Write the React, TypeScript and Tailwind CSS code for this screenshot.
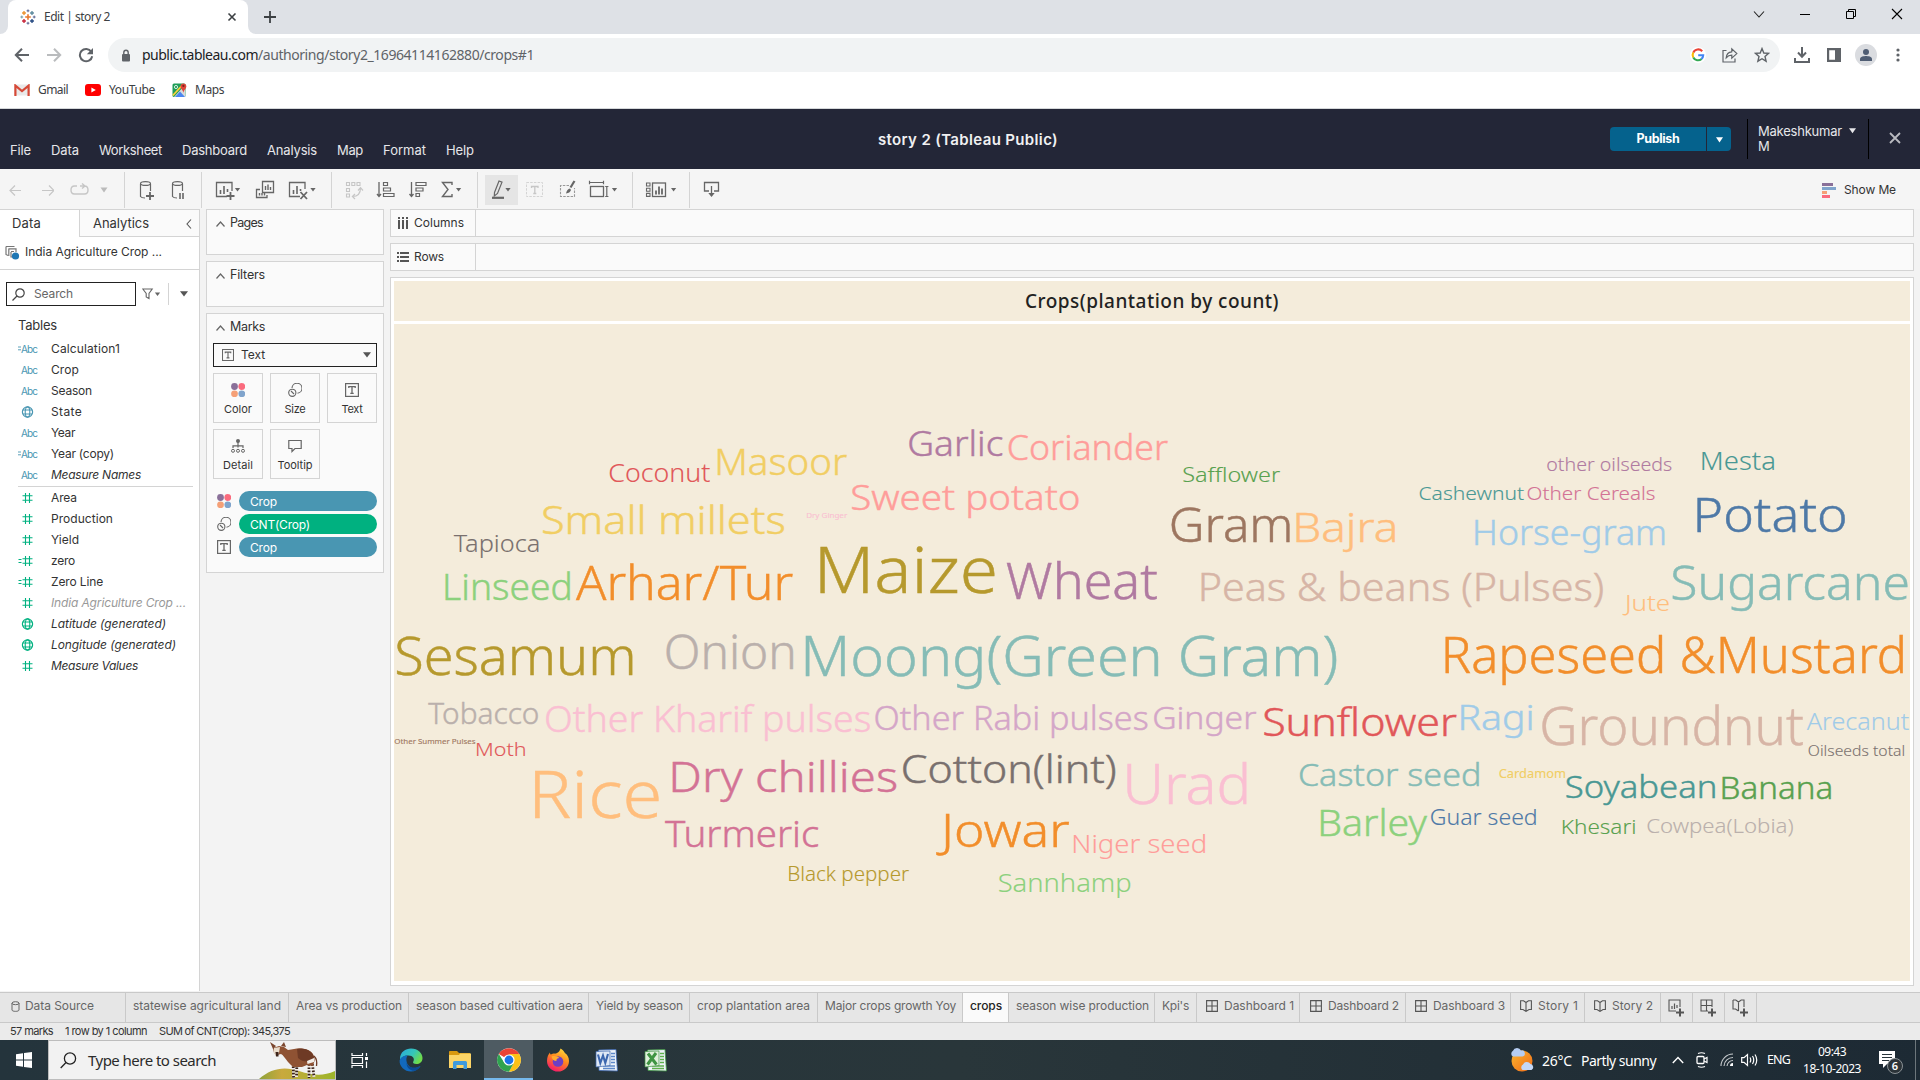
import React, { useLayoutEffect, useRef, useState } from "react";
import clsx from "clsx";

/* Single line of text, tracked so that it fills a given width. */
function Fit({ w, className, children }: { w: number; className?: string; children: string }) {
  const ref = useRef<HTMLSpanElement>(null);
  const [ls, setLs] = useState(0);
  useLayoutEffect(() => {
    const el = ref.current;
    if (!el) return;
    el.style.letterSpacing = "0px";
    const natural = el.getBoundingClientRect().width;
    const next = (w - natural) / children.length;
    el.style.letterSpacing = next + "px";
    setLs(next);
  }, [w, children]);
  return (
    <span ref={ref} className={clsx("inline-block whitespace-pre shrink-0", className)} style={{ letterSpacing: ls }}>
      {children}
    </span>
  );
}

type IconProps = { w: number; h: number; className?: string; children: React.ReactNode };
function Svg({ w, h, className, children }: IconProps) {
  return (
    <svg width={w} height={h} viewBox={`0 0 ${w} ${h}`} fill="none" className={clsx("shrink-0", className)}>
      {children}
    </svg>
  );
}

/* ---------- Browser chrome ---------- */

function TableauMark() {
  const plus = (x: number, y: number, r: number, c: string, s = 1.3) => (
    <path key={`${x}-${y}`} d={`M${x - r} ${y}H${x + r}M${x} ${y - r}V${y + r}`} stroke={c} strokeWidth={s} />
  );
  return (
    <Svg w={16} h={16}>
      {plus(8, 8, 2.8, "#e8762d", 1.6)}
      {plus(4, 4, 1.9, "#eb912c")}
      {plus(12, 4, 1.9, "#59879b")}
      {plus(4, 12, 1.9, "#c72035")}
      {plus(12, 12, 1.9, "#1f447e")}
      {plus(8, 1.8, 1.4, "#5b6591", 1)}
      {plus(8, 14.2, 1.4, "#5b6591", 1)}
      {plus(1.8, 8, 1.4, "#7199a6", 1)}
      {plus(14.2, 8, 1.4, "#5b6591", 1)}
    </Svg>
  );
}

function TabStrip() {
  return (
    <div className="flex h-[34px] bg-[#dee1e6]">
      <div className="flex w-2 items-end bg-white">
        <div className="h-full w-2 rounded-br-lg bg-[#dee1e6]" />
      </div>
      <div className="flex w-[240px] items-center rounded-t-lg bg-white pl-3">
        <TableauMark />
        <Fit w={66} className="ml-2 text-[12px] text-[#3c4043]">Edit | story 2</Fit>
        <Svg w={10} h={10} className="ml-[117px]">
          <path d="M1.5 1.5L8.5 8.5M8.5 1.5L1.5 8.5" stroke="#3c4043" strokeWidth="1.6" />
        </Svg>
      </div>
      <div className="w-2 bg-white">
        <div className="h-full w-2 rounded-bl-lg bg-[#dee1e6]" />
      </div>
      <Svg w={14} h={14} className="ml-[7px] mt-[10px]">
        <path d="M7 1V13M1 7H13" stroke="#3c4043" strokeWidth="1.8" />
      </Svg>
      <div className="ml-auto mr-[16px] mt-[7px] flex gap-[32px]">
        <Svg w={14} h={14}><path d="M2 4.5L7 10L12 4.5" stroke="#222" strokeWidth="1.1" /></Svg>
        <Svg w={14} h={14}><path d="M2 7.5H12" stroke="#000" strokeWidth="1" /></Svg>
        <Svg w={14} h={14}><path d="M2.5 4.5H9.5V11.5H2.5ZM4.5 4.5V2.5H11.5V9.5H9.5" stroke="#000" strokeWidth="1" /></Svg>
        <Svg w={14} h={14}><path d="M2 2L12 12M12 2L2 12" stroke="#000" strokeWidth="1.1" /></Svg>
      </div>
    </div>
  );
}

function GoogleG() {
  return (
    <Svg w={16} h={16}>
      <circle cx="8" cy="8" r="8" fill="#fff" />
      <path d="M12.2 4.2A5.3 5.3 0 0 0 3.3 5.6" stroke="#ea4335" strokeWidth="2.1" />
      <path d="M3.3 5.5A5.3 5.3 0 0 0 3.3 10.6" stroke="#fbbc05" strokeWidth="2.1" />
      <path d="M3.3 10.4A5.3 5.3 0 0 0 11.6 11.9" stroke="#34a853" strokeWidth="2.1" />
      <path d="M11.4 12A5.3 5.3 0 0 0 13.2 8.2H8.2" stroke="#4285f4" strokeWidth="2.1" />
    </Svg>
  );
}

function AddressBar() {
  return (
    <div className="flex h-[42px] items-center bg-white">
      <Svg w={16} h={16} className="ml-[14px]"><path d="M15 8H2M8 1.8L1.8 8L8 14.2" stroke="#5f6368" strokeWidth="2" /></Svg>
      <Svg w={16} h={16} className="ml-4"><path d="M1 8H14M8 1.8L14.2 8L8 14.2" stroke="#babcbe" strokeWidth="2" /></Svg>
      <Svg w={16} h={16} className="ml-4">
        <path d="M13.3 4.7A6.2 6.2 0 1 0 14.2 9.2" stroke="#5f6368" strokeWidth="2" />
        <path d="M15 1V7.2H8.8Z" fill="#5f6368" />
      </Svg>
      <div className="ml-[14px] flex h-[34px] w-[1672px] items-center rounded-full bg-[#f1f3f4]">
        <Svg w={10} h={13} className="ml-[13px]">
          <path d="M2.8 5.5V3.4A2.2 2.2 0 0 1 7.2 3.4V5.5" stroke="#5f6368" strokeWidth="1.4" />
          <rect x="1" y="5" width="8" height="7.5" rx="1" fill="#5f6368" />
        </Svg>
        <Fit w={116} className="ml-[11px] pb-px text-[14px] text-[#202124]">public.tableau.com</Fit>
        <Fit w={276} className="pb-px text-[14px] text-[#5f6368]">/authoring/story2_16964114162880/crops#1</Fit>
        <div className="ml-auto mr-[10px] flex items-center gap-4">
          <GoogleG />
          <Svg w={16} h={16}>
            <path d="M4.5 3.5H1V15H13V11.5" stroke="#5f6368" strokeWidth="1.2" />
            <path d="M4.2 10.8C4.5 7 6.5 5 9.8 4.8V1.8L14.8 6.6L9.8 11.2V8.2C7.5 8.2 5.8 8.9 4.2 10.8Z" stroke="#5f6368" strokeWidth="1.2" />
          </Svg>
          <Svg w={16} h={16}>
            <path d="M8 1.6L9.8 6L14.6 6.4L11 9.5L12.1 14.2L8 11.7L3.9 14.2L5 9.5L1.4 6.4L6.2 6Z" stroke="#5f6368" strokeWidth="1.4" />
          </Svg>
        </div>
      </div>
      <Svg w={16} h={16} className="ml-[14px]">
        <path d="M8 0V9M4 5.5L8 9.7L12 5.5M1 11V15H15V11" stroke="#5f6368" strokeWidth="2" />
      </Svg>
      <Svg w={16} h={16} className="ml-4">
        <path d="M1 1H15V15H1ZM3.2 3.2V12.8H9V3.2Z" fill="#5f6368" fillRule="evenodd" />
      </Svg>
      <Svg w={22} h={22} className="ml-[13px]">
        <circle cx="11" cy="11" r="11" fill="#dadce0" />
        <circle cx="11" cy="8" r="3" fill="#4f5d73" />
        <path d="M5 17V15C5 12.6 9 12 11 12S17 12.6 17 15V17Z" fill="#4f5d73" />
      </Svg>
      <Svg w={4} h={16} className="ml-[19px]">
        <circle cx="2" cy="3" r="1.6" fill="#5f6368" />
        <circle cx="2" cy="8" r="1.6" fill="#5f6368" />
        <circle cx="2" cy="13" r="1.6" fill="#5f6368" />
      </Svg>
    </div>
  );
}

function Bookmarks() {
  return (
    <div className="flex h-[33px] items-center border-b border-[#d5d8da] bg-white pb-[5px] text-[12px] text-[#3c4043]">
      <Svg w={16} h={12} className="ml-[14px]">
        <rect x="0.5" y="0.5" width="15" height="11" fill="#e9e9e9" />
        <path d="M1.4 12V1.6L8 7L14.6 1.6V12" stroke="#d64937" strokeWidth="2.2" />
      </Svg>
      <Fit w={30} className="ml-2">Gmail</Fit>
      <Svg w={16} h={12} className="ml-[17px]">
        <rect width="16" height="12" rx="3" fill="#f00" />
        <path d="M6.4 3.4V8.6L10.8 6Z" fill="#fff" />
      </Svg>
      <Fit w={46} className="ml-2">YouTube</Fit>
      <Svg w={16} h={16} className="ml-[17px]">
        <rect x="0.5" y="1.5" width="13" height="13.5" rx="1.5" fill="#1f9d58" />
        <path d="M13 3L2 15H13.5Z" fill="#d8dadc" />
        <path d="M3 15L8 9.6L13 15Z" fill="#4b87f0" />
        <path d="M0.8 13.5L11 2.5" stroke="#fcd33b" strokeWidth="1.8" />
        <circle cx="4" cy="5" r="1.6" stroke="#fff" strokeWidth="0.8" />
        <path d="M11.4 11C11.2 8 8.5 7 8.5 4A3 3 0 0 1 14.4 4C14.4 7 11.7 8 11.4 11Z" fill="#e0453a" />
        <circle cx="11.4" cy="3.9" r="1.1" fill="#7b231e" />
      </Svg>
      <Fit w={29} className="ml-[7px]">Maps</Fit>
    </div>
  );
}

/* ---------- Application header ---------- */

const menus: [string, number][] = [
  ["File", 21], ["Data", 28], ["Worksheet", 63], ["Dashboard", 65],
  ["Analysis", 50], ["Map", 26], ["Format", 43], ["Help", 28],
];

function Header() {
  return (
    <div className="relative flex h-[60px] bg-[#232637] text-[13px] text-[#e6e6ea]">
      <div className="flex items-end gap-5 pb-[9px] pl-[10px]">
        {menus.map(([m, w]) => <Fit key={m} w={w}>{m}</Fit>)}
      </div>
      <div className="absolute left-[878px] top-5">
        <Fit w={180} className="text-[15px] font-semibold text-[#f0f0f2]">story 2 (Tableau Public)</Fit>
      </div>
      <div className="ml-auto flex">
        <div className="mt-[18px] flex h-6 gap-px overflow-hidden rounded-sm">
          <div className="flex w-[96px] items-center justify-center bg-[#05628d] font-bold text-white">
            <Fit w={43} className="text-[12.5px]">Publish</Fit>
          </div>
          <div className="flex w-6 items-center justify-center bg-[#05628d] pt-px">
            <Svg w={7} h={6}><path d="M0 0.3H7L3.5 5.5Z" fill="#fff" /></Svg>
          </div>
        </div>
        <div className="ml-4 mt-[10px] h-10 w-px bg-black" />
        <div className="ml-[10px] mt-[15px] w-[85px] text-[13px] leading-[15px]">
          <Fit w={84}>Makeshkumar</Fit>
          <div>M</div>
        </div>
        <Svg w={7} h={6} className="ml-[6px] mt-[19px]"><path d="M0 0.3H7L3.5 5.3Z" fill="#e6e6ea" /></Svg>
        <div className="ml-3 mt-[10px] h-10 w-px bg-black" />
        <Svg w={12} h={12} className="ml-5 mr-[19px] mt-[23px]">
          <path d="M1 1L11 11M11 1L1 11" stroke="#b9bac0" strokeWidth="1.8" />
        </Svg>
      </div>
    </div>
  );
}

/* ---------- Toolbar ---------- */

const G = "#666";
const L = "#c6c6c6";

function Sep({ className }: { className: string }) {
  return <div className={clsx("h-9 w-px shrink-0 bg-[#d4d4d4]", className)} />;
}

function Caret({ x, y = 10, c = G }: { x: number; y?: number; c?: string }) {
  return <path d={`M${x - 2.6} ${y}H${x + 2.6}L${x} ${y + 3.4}Z`} fill={c} />;
}

function ToolBar() {
  return (
    <div className="flex h-10 items-center bg-[#f5f5f5] pt-[2px]">
      <Svg w={12} h={24} className="ml-[9px]"><path d="M12 12.5H1M6 7.5L1 12.5L6 17.5" stroke={L} strokeWidth="1.2" /></Svg>
      <Svg w={12} h={24} className="ml-[21px]"><path d="M0 12.5H12M7 7.5L12 12.5L7 17.5" stroke={L} strokeWidth="1.2" /></Svg>
      <Svg w={20} h={24} className="ml-4">
        <path d="M7 8H4.500Q1 8 1 12T4.500 16H14.500Q18 16 18 12T14.500 8M10 8H15M12 5.500L15 8L12 10.500" stroke={L} strokeWidth="1.4" />
      </Svg>
      <Svg w={8} h={24} className="ml-[10px] mr-[16px]"><path d="M0.500 9.500H7.500L4 14.500Z" fill="#bbb" /></Svg>
      <Sep className="" />
      <Svg w={20} h={24} className="ml-[14px]">
        <path d="M1.5 6V18.5Q2.5 20 6 20M11.5 6V13" stroke={G} strokeWidth="1.2" />
        <ellipse cx="6.5" cy="5.5" rx="5" ry="1.9" stroke={G} strokeWidth="1.2" />
        <path d="M11 14V22M7 18H15" stroke={G} strokeWidth="1.8" />
      </Svg>
      <Svg w={20} h={24} className="ml-[12px]">
        <path d="M1.5 6V18.5Q2.5 20 6 20M11.5 6V13" stroke={G} strokeWidth="1.2" />
        <ellipse cx="6.5" cy="5.5" rx="5" ry="1.9" stroke={G} strokeWidth="1.2" />
        <path d="M9 15V21M12 15V21" stroke={G} strokeWidth="1.6" />
      </Svg>
      <Sep className="ml-[10px]" />
      <Svg w={30} h={24} className="ml-[13px]">
        <path d="M12 18.5H1.5V4.5H17V13" stroke={G} strokeWidth="1.3" />
        <path d="M5.5 12V16M9 8V16M12.5 11V14" stroke={G} strokeWidth="1.6" />
        <path d="M15.5 14V22M11.5 18H19.5" stroke={G} strokeWidth="1.8" />
        <Caret x={22.5} />
      </Svg>
      <Svg w={24} h={24} className="ml-[10px]">
        <path d="M7.5 3.5H18.5V14.5H7.5Z M5 11.5H1.5V19.5H12V17" stroke={G} strokeWidth="1.3" />
        <path d="M10.5 8V12M13 6.5V12M15.5 9V12M4.5 15V17.5M7 15V17.5M9.5 15V17.5" stroke={G} strokeWidth="1.4" />
      </Svg>
      <Svg w={30} h={24} className="ml-[9px]">
        <path d="M12 18.5H1.5V4.5H17V11" stroke={G} strokeWidth="1.3" />
        <path d="M5.5 12V16M9 8V16M12.5 11V13" stroke={G} strokeWidth="1.6" />
        <path d="M12.5 14L19 21M19 14L12.5 21" stroke={G} strokeWidth="1.8" />
        <Caret x={25} />
      </Svg>
      <Sep className="ml-[13px]" />
      <Svg w={20} h={24} className="ml-[13px]">
        <path d="M1.5 4.5H4.5V7.5H1.5ZM6.8 4.5H9.8V7.5H6.8ZM12 4.5H15V7.5H12ZM1.5 10.5H4.5V13.5H1.5ZM1.5 16H4.5V19H1.5Z" stroke={L} strokeWidth="1.1" />
        <path d="M7.5 18.5Q15.5 18.5 15.5 10M13 12.5L15.5 9.7L18 12.5M10 16L7.4 18.5L10 21" stroke={L} strokeWidth="1.2" />
      </Svg>
      <Svg w={20} h={24} className="ml-[11px]">
        <path d="M3 4V18M1 16L3 18.5L5 16" stroke={G} strokeWidth="1.3" />
        <path d="M7.5 4.5H11.5V7.5H7.5ZM7.5 10H14.5V13H7.5ZM7.5 15.5H18V18.5H7.5Z" stroke={G} strokeWidth="1.2" />
      </Svg>
      <Svg w={20} h={24} className="ml-3">
        <path d="M3.5 4V18M1.5 16L3.5 18.5L5.5 16" stroke={G} strokeWidth="1.3" />
        <path d="M8 4.5H18V7.5H8ZM8 10H15V13H8ZM8 15.5H11.5V18.5H8Z" stroke={G} strokeWidth="1.2" />
      </Svg>
      <Svg w={24} h={24} className="ml-3">
        <path d="M12 7V4.5H2.5L8 11.5L2.5 18.5H12V16" stroke={G} strokeWidth="1.4" />
        <Caret x={18.6} />
      </Svg>
      <Sep className="ml-[13px]" />
      <div className="ml-[7px] flex h-[30px] w-[33px] items-center bg-[#e5e5e5]">
        <Svg w={33} h={24}>
          <path d="M9.5 14.5L14 3L17 4.2L12.5 15.5L9.3 18Z" stroke={G} strokeWidth="1.2" />
          <path d="M7 19.8H19" stroke={G} strokeWidth="2.2" />
          <Caret x={23} />
        </Svg>
      </div>
      <Svg w={20} h={24} className="ml-[7px]">
        <rect x="1.5" y="4.5" width="16" height="14" stroke="#d4d4d4" strokeDasharray="2.5 1.2" />
        <path d="M6.5 10V8.5H13V10M9.8 8.5V15.5M8.3 15.5H11.3" stroke={L} strokeWidth="1.3" />
      </Svg>
      <Svg w={20} h={24} className="ml-[13px]">
        <path d="M11 7.5H2.5V18.5H16.5V10" stroke="#999" strokeDasharray="2.5 1.2" strokeWidth="1.1" />
        <path d="M16.5 3L12.5 9.5" stroke={G} strokeWidth="2.2" />
        <path d="M8 15.5Q9 10.8 12 10.5L13 12Q12 15 8 15.5Z" fill={G} />
      </Svg>
      <Svg w={30} h={24} className="ml-[10px]">
        <rect x="2.5" y="8.5" width="13" height="10" stroke={G} strokeWidth="1.3" />
        <path d="M1.5 4.5H15.5M1.5 2.8V6.2M15.5 2.8V6.2M18.8 8.5V18.5M17.2 8.5H20.4M17.2 18.5H20.4" stroke={G} strokeWidth="1.2" />
        <Caret x={26.5} />
      </Svg>
      <Sep className="ml-[14px]" />
      <Svg w={33} h={24} className="ml-3">
        <path d="M1.5 5H5V8H1.5ZM1.5 10.2H5V13.2H1.5ZM1.5 15.4H5V18.4H1.5Z" stroke={G} strokeWidth="1.1" />
        <rect x="7.5" y="5" width="13" height="13.5" stroke={G} strokeWidth="1.3" />
        <path d="M11 12.5V16.5M14 8.5V16.5M17 10.5V16.5" stroke={G} strokeWidth="1.8" />
        <Caret x={28.6} />
      </Svg>
      <Sep className="ml-[11px]" />
      <Svg w={18} h={24} className="ml-[13px]">
        <path d="M6 13H1.5V4.5H15.5V13H11" stroke={G} strokeWidth="1.3" />
        <path d="M8.5 8V16" stroke={G} strokeWidth="1.3" />
        <path d="M5.3 15H11.7L8.5 19Z" fill={G} />
      </Svg>
      <div className="ml-auto mr-[24px] flex items-center">
        <Svg w={14} h={15}>
          <path d="M0 0H11V3H0Z" fill="#8a7099" />
          <path d="M0 4H14V7H0Z" fill="#80a4cc" />
          <path d="M0 8H5V11H0Z" fill="#f5a077" />
          <path d="M0 12H8V15H0Z" fill="#fa6b7e" />
        </Svg>
        <Fit w={52} className="ml-2 text-[12px] text-[#333]">Show Me</Fit>
      </div>
    </div>
  );
}

/* ---------- Data pane ---------- */

type Kind = "abc" | "=abc" | "geo" | "num" | "=num" | "geoNum";

function FieldIcon({ kind }: { kind: Kind }) {
  const eq = kind[0] === "=";
  if (kind === "abc" || kind === "=abc")
    return (
      <div className="flex w-[33px] items-center text-[10px] text-[#4996b2]">
        <span className="w-[3px]">
          {eq && <Svg w={3} h={5}><path d="M0 1H3M0 3.8H3" stroke="#4996b2" strokeWidth="0.9" /></Svg>}
        </span>
        <Fit w={16} className="leading-none">Abc</Fit>
      </div>
    );
  if (kind === "geo" || kind === "geoNum") {
    const c = kind === "geo" ? "#4996b2" : "#00b180";
    return (
      <Svg w={33} h={12}>
        <circle cx="9.5" cy="6" r="5.1" stroke={c} strokeWidth="1.2" />
        <ellipse cx="9.5" cy="6" rx="2.3" ry="5.1" stroke={c} strokeWidth="1.1" />
        <path d="M5 4H14M5 8H14" stroke={c} strokeWidth="1.1" />
      </Svg>
    );
  }
  return (
    <Svg w={33} h={12}>
      <path d="M7.5 1V11M11.5 1V11M4.5 3.8H14.5M4.5 8.2H14.5" stroke="#00b180" strokeWidth="1.1" />
      {eq && <path d="M0.5 4.5H3.5M0.5 7.5H3.5" stroke="#00b180" strokeWidth="1" />}
    </Svg>
  );
}

type Field = [Kind, string, number, string?];
const dimensions: Field[] = [
  ["=abc", "Calculation1", 69],
  ["abc", "Crop", 28],
  ["abc", "Season", 41],
  ["geo", "State", 31],
  ["abc", "Year", 24],
  ["=abc", "Year (copy)", 63],
  ["abc", "Measure Names", 90, "italic"],
];
const measures: Field[] = [
  ["num", "Area", 26],
  ["num", "Production", 62],
  ["num", "Yield", 28],
  ["=num", "zero", 24],
  ["=num", "Zero Line", 52],
  ["num", "India Agriculture Crop ...", 135, "italic text-[#999]"],
  ["geoNum", "Latitude (generated)", 115, "italic"],
  ["geoNum", "Longitude (generated)", 125, "italic"],
  ["num", "Measure Values", 87, "italic"],
];

function Fields({ items }: { items: Field[] }) {
  return (
    <div>
      {items.map(([k, name, w, cls]) => (
        <div key={name} className="flex h-[21px] items-center pl-[18px]">
          <FieldIcon kind={k} />
          <Fit w={w} className={cls}>{name}</Fit>
        </div>
      ))}
    </div>
  );
}

function DataPane() {
  return (
    <div className="flex w-[200px] shrink-0 flex-col border-r border-t border-[#d4d4d4] bg-white text-[12px] text-[#333]">
      <div className="flex h-[27px] text-[13px]">
        <div className="flex w-[79px] items-center pl-3 pt-px"><Fit w={29}>Data</Fit></div>
        <div className="flex flex-1 items-center border-b border-l border-[#d4d4d4] bg-[#fafafa] pl-[13px] pt-[2px]">
          <Fit w={56}>Analytics</Fit>
          <Svg w={6} h={10} className="ml-[37px]"><path d="M5 0.5L1 5L5 9.5" stroke="#555" strokeWidth="1.1" /></Svg>
        </div>
      </div>
      <div className="flex h-[33px] items-center border-b border-[#d4d4d4] pb-[2px] pl-[5px]">
        <Svg w={15} h={15}>
          <path d="M1 1.5H9.5M1 1.5V9.5L3 10.5M3.8 3.5V11M3.8 3.8H11V7M6 7V12H8M6 6.5H9" stroke="#777" strokeWidth="1.2" />
          <circle cx="10.5" cy="11" r="3.6" fill="#1f77b4" />
        </Svg>
        <Fit w={137} className="ml-[5px]">India Agriculture Crop ...</Fit>
      </div>
      <div className="mt-3 flex h-6 items-center pl-[6px]">
        <div className="flex h-6 w-[130px] items-center border border-[#222] pl-[5px]">
          <Svg w={13} h={13}>
            <circle cx="8" cy="5" r="4.2" stroke="#444" strokeWidth="1.2" />
            <path d="M5 8L0.5 12.5" stroke="#444" strokeWidth="1.3" />
          </Svg>
          <Fit w={39} className="ml-[9px] text-[#666]">Search</Fit>
        </div>
        <Svg w={20} h={12} className="ml-[6px]">
          <path d="M0.8 1H10.2L7 5.5V10.5L4.2 9V5.5Z" stroke={G} strokeWidth="1.1" />
          <Caret x={15.5} y={4.5} />
        </Svg>
        <div className="ml-[6px] h-[22px] w-px bg-[#d4d4d4]" />
        <Svg w={8} h={6} className="ml-[11px]"><path d="M0 0.3H8L4 5.5Z" fill="#555" /></Svg>
      </div>
      <div className="mt-[9px] mb-px flex h-[22px] items-center pl-[18px] text-[13px]"><Fit w={39}>Tables</Fit></div>
      <Fields items={dimensions} />
      <div className="ml-[18px] mr-[6px] mt-[1px] h-px bg-[#d4d4d4]" />
      <Fields items={measures} />
    </div>
  );
}

/* ---------- Cards ---------- */

function CardTitle({ w, children }: { w: number; children: string }) {
  return (
    <div className="flex h-[27px] items-center pl-[9px] text-[12.5px] text-[#333]">
      <Svg w={9} h={6}><path d="M0.5 5.5L4.5 1L8.5 5.5" stroke="#666" strokeWidth="1.2" /></Svg>
      <Fit w={w} className="ml-[5px]">{children}</Fit>
    </div>
  );
}

function ColorDots() {
  return (
    <Svg w={14} h={14}>
      <circle cx="3.5" cy="3.5" r="3.4" fill="#8a7099" />
      <circle cx="10.8" cy="3.5" r="3.4" fill="#fa6b7e" />
      <circle cx="3.5" cy="10.8" r="3.4" fill="#f5a077" />
      <circle cx="10.8" cy="10.8" r="3.4" fill="#80a4cc" />
    </Svg>
  );
}
function SizeIcon() {
  return (
    <Svg w={14} h={14}>
      <path d="M4 5A5 5 0 1 1 9.5 10.2" stroke={G} strokeWidth="1.1" />
      <circle cx="4.3" cy="9.8" r="3.6" stroke={G} strokeWidth="1.1" />
      <path d="M3 8L6 11" stroke={G} strokeWidth="1.1" />
    </Svg>
  );
}
function TextIcon({ s = 14 }: { s?: number }) {
  return (
    <svg width={s} height={s} viewBox="0 0 14 14" fill="none" className="shrink-0">
      <rect x="0.6" y="0.6" width="12.8" height="12.8" stroke={G} strokeWidth="1.2" />
      <path d="M3.8 5V3.7H10.2V5M7 3.7V10.4M5.3 10.4H8.7" stroke={G} strokeWidth="1.3" />
    </svg>
  );
}
function DetailIcon() {
  return (
    <Svg w={14} h={14}>
      <circle cx="7" cy="2" r="2" fill={G} />
      <path d="M7 3V8.5M2 9V6.8H12V9" stroke={G} strokeWidth="1.2" />
      <circle cx="2" cy="11.8" r="1.5" stroke={G} />
      <circle cx="7" cy="11.8" r="1.5" stroke={G} />
      <circle cx="12" cy="11.8" r="1.5" stroke={G} />
    </Svg>
  );
}
function TooltipIcon() {
  return (
    <Svg w={14} h={14}><path d="M0.8 1.5H13.2V9.5H7L4 12.5V9.5H0.8Z" stroke={G} strokeWidth="1.2" /></Svg>
  );
}

const markButtons: [string, number, React.ReactNode][] = [
  ["Color", 28, <ColorDots />],
  ["Size", 21, <SizeIcon />],
  ["Text", 21, <TextIcon />],
  ["Detail", 30, <DetailIcon />],
  ["Tooltip", 35, <TooltipIcon />],
];
const pills: [React.ReactNode, string, number, string][] = [
  [<ColorDots />, "Crop", 27, "bg-[#4996b2]"],
  [<SizeIcon />, "CNT(Crop)", 60, "bg-[#00b180]"],
  [<TextIcon />, "Crop", 27, "bg-[#4996b2]"],
];

function Cards() {
  return (
    <div className="ml-[6px] flex w-[178px] shrink-0 flex-col gap-[6px]">
      <div className="h-[46px] border border-[#d4d4d4] bg-[#fafafa]"><CardTitle w={33}>Pages</CardTitle></div>
      <div className="h-[46px] border border-[#d4d4d4] bg-[#fafafa]"><CardTitle w={35}>Filters</CardTitle></div>
      <div className="h-[260px] border border-[#d4d4d4] bg-[#fafafa] pr-[6px]">
        <CardTitle w={35}>Marks</CardTitle>
        <div className="ml-[6px] mt-[2px] flex h-6 items-center border border-[#222] pl-2 pr-[5px] text-[12px] text-[#333]">
          <TextIcon s={12} />
          <Fit w={24} className="ml-[7px]">Text</Fit>
          <Svg w={8} h={6} className="ml-auto"><path d="M0 0.3H8L4 5.5Z" fill="#555" /></Svg>
        </div>
        <div className="ml-[6px] mt-[6px] grid grid-cols-3 gap-x-[7px] gap-y-[6px]">
          {markButtons.map(([n, w, icon]) => (
            <div key={n} className="flex h-[50px] flex-col items-center border border-[#d4d4d4] pt-[9px] text-[11px] text-[#333]">
              {icon}
              <Fit w={w} className="mt-1 leading-4">{n}</Fit>
            </div>
          ))}
        </div>
        <div className="mt-3 flex flex-col gap-[3px] pl-[10px]">
          {pills.map(([icon, n, w, bg], i) => (
            <div key={i} className="flex h-5 items-center">
              {icon}
              <div className={clsx("ml-2 flex h-5 flex-1 items-center rounded-full pl-[11px] pt-px text-[12px] text-white", bg)}>
                <Fit w={w}>{n}</Fit>
              </div>
            </div>
          ))}
        </div>
      </div>
    </div>
  );
}

/* ---------- Word cloud ---------- */

type Word = [text: string, x1: number, x2: number, baseline: number, size: number, color: string];
const words: Word[] = [
  ["Garlic", 909.4, 1002.4, 456, 34.5, "#b07aa1"],
  ["Coriander", 1008.9, 1167.7, 460, 34.5, "#ff9d9a"],
  ["Masoor", 717.9, 846.7, 475, 36, "#f1ce63"],
  ["Coconut", 609.9, 709.9, 481.5, 25, "#e15759"],
  ["Sweet potato", 852.2, 1078.6, 509.5, 34.5, "#ff9d9a"],
  ["Small millets", 543.2, 784, 534, 38.5, "#f1ce63"],
  ["Dry Ginger", 806.9, 847.2, 518, 8, "#fabfd2"],
  ["Tapioca", 453.7, 538.3, 552, 23, "#79706e"],
  ["Linseed", 445.7, 569.6, 600, 36, "#8cd17d"],
  ["Arhar/Tur", 576, 792.5, 600, 48, "#f28e2b"],
  ["Maize", 820.3, 994.5, 593, 65, "#b6992d"],
  ["Wheat", 1006.9, 1156.7, 599, 49, "#b07aa1"],
  ["Sesamum", 397, 632.3, 675, 53, "#b6992d"],
  ["Onion", 666.6, 793, 668.7, 47, "#bab0ac"],
  ["Moong(Green Gram)", 805.9, 1336.6, 676, 56, "#86bcb6"],
  ["Safflower", 1183.4, 1280.2, 481.5, 20.5, "#59a14f"],
  ["Gram", 1171.6, 1289.5, 541.7, 47, "#9d7660"],
  ["Bajra", 1296.9, 1394.6, 541.7, 40, "#ffbe7d"],
  ["other oilseeds", 1547.3, 1671.6, 471, 18, "#b07aa1"],
  ["Mesta", 1702.6, 1773.8, 470, 25, "#499894"],
  ["Cashewnut", 1419.6, 1523.8, 499.7, 19, "#499894"],
  ["Other Cereals", 1527.7, 1654.9, 499.7, 19, "#d37295"],
  ["Potato", 1697.6, 1845, 531.7, 47, "#4e79a7"],
  ["Horse-gram", 1475.6, 1664.2, 545, 35, "#a0cbe8"],
  ["Peas & beans (Pulses)", 1201.6, 1602.8, 600.7, 39, "#d7b5a6"],
  ["Jute", 1622.5, 1668.7, 610.7, 21.5, "#ffbe7d"],
  ["Sugarcane", 1673, 1907.4, 599.7, 47, "#86bcb6"],
  ["Rapeseed &Mustard", 1445.7, 1903, 672.7, 49, "#f28e2b"],
  ["Tobacco", 428.3, 537.8, 723.7, 29, "#bab0ac"],
  ["Other Kharif pulses", 546.2, 869.6, 731.7, 36, "#fabfd2"],
  ["Other Rabi pulses", 875.6, 1147.2, 730, 33, "#d4a6c8"],
  ["Other Summer Pulses", 394.5, 475.6, 743.7, 7.5, "#9d7660"],
  ["Moth", 477, 524.8, 755.7, 19, "#e15759"],
  ["Rice", 534.8, 658.7, 817.7, 67, "#ffbe7d"],
  ["Dry chillies", 673, 896, 791.7, 43, "#d37295"],
  ["Cotton(lint)", 903.4, 1115.4, 782.7, 38, "#79706e"],
  ["Urad", 1127.3, 1246.3, 804.3, 56, "#fabfd2"],
  ["Turmeric", 665, 818.4, 846.7, 36, "#d37295"],
  ["Jowar", 936.3, 1069, 846.7, 46, "#f28e2b"],
  ["Niger seed", 1074, 1205, 852.7, 26, "#ff9d9a"],
  ["Black pepper", 789, 909, 881, 19.5, "#b6992d"],
  ["Sannhamp", 999, 1130.3, 891.7, 26, "#8cd17d"],
  ["Ginger", 1154, 1256, 729, 31.5, "#d4a6c8"],
  ["Sunflower", 1264.4, 1456.5, 735.7, 38, "#e15759"],
  ["Ragi", 1461.4, 1532, 729.7, 35.5, "#a0cbe8"],
  ["Groundnut", 1542.4, 1802.8, 745.3, 53, "#d7b5a6"],
  ["Arecanut", 1806.7, 1908.8, 730, 23, "#a0cbe8"],
  ["Oilseeds total", 1808.6, 1904, 755.7, 14.5, "#79706e"],
  ["Castor seed", 1299.8, 1478.6, 785.5, 31, "#86bcb6"],
  ["Cardamom", 1499.2, 1565, 778, 12, "#f1ce63"],
  ["Soyabean", 1566.5, 1714.8, 798, 31.5, "#499894"],
  ["Banana", 1722.7, 1830.7, 798.7, 31.5, "#59a14f"],
  ["Barley", 1321, 1427, 835.7, 36, "#8cd17d"],
  ["Guar seed", 1431, 1536, 825, 22, "#4e79a7"],
  ["Khesari", 1563, 1634.8, 833.7, 20.5, "#59a14f"],
  ["Cowpea(Lobia)", 1647.5, 1793, 833, 20.5, "#bab0ac"],
];

const wordWeight = (size: number) => (size < 13 ? 400 : 300);

/* Scales each word horizontally so that its ink runs exactly from x1 to x2. */
function WordCloud() {
  const [placed, setPlaced] = useState<{ x: number; k: number }[]>([]);
  useLayoutEffect(() => {
    const ctx = document.createElement("canvas").getContext("2d");
    if (!ctx) return;
    setPlaced(
      words.map(([t, x1, x2, , size]) => {
        ctx.font = `${wordWeight(size)} ${size * 4}px "Noto Sans"`;
        const m = ctx.measureText(t);
        const left = m.actualBoundingBoxLeft / 4;
        const ink = left + m.actualBoundingBoxRight / 4;
        const k = (x2 - x1) / ink;
        return { x: x1 + left * k, k };
      })
    );
  }, []);
  return (
    <svg width={1516} height={657} viewBox="394 324 1516 657" className="block">
      {words.map(([t, x1, , y, size, c], i) => (
        <text
          key={t}
          transform={`translate(${placed[i]?.x ?? x1} ${y}) scale(${placed[i]?.k ?? 1} 1)`}
          fill={c}
          stroke={c}
          strokeWidth={size > 28 ? 0.45 : 0.1}
          fontSize={size}
          fontWeight={wordWeight(size)}
          fontFamily='"Noto Sans", sans-serif'
        >
          {t}
        </text>
      ))}
    </svg>
  );
}

function Shelf({ label, w, icon }: { label: string; w: number; icon: React.ReactNode }) {
  return (
    <div className="flex h-7 border border-[#d4d4d4] bg-[#fafafa]">
      <div className="flex w-[85px] items-center border-r border-[#d4d4d4] pl-[6px] text-[12px] text-[#333]">
        {icon}
        <Fit w={w} className="ml-[5px]">{label}</Fit>
      </div>
    </div>
  );
}

function View() {
  return (
    <div className="ml-[6px] flex w-[1524px] flex-col gap-[6px]">
      <Shelf label="Columns" w={50} icon={
        <Svg w={12} h={12}><path d="M2 0V2M6 0V2M10 0V2M2 3V12M6 3V12M10 3V12" stroke="#555" strokeWidth="2" /></Svg>
      } />
      <Shelf label="Rows" w={30} icon={
        <Svg w={12} h={12}><path d="M0 2H2M0 6H2M0 10H2M3 2H12M3 6H12M3 10H12" stroke="#555" strokeWidth="2" /></Svg>
      } />
      <div className="flex h-[709px] flex-col gap-[3px] border border-[#d4d4d4] bg-white p-[3px]">
        <div className="flex h-10 items-center justify-center bg-[#f4ecdb]">
          <Fit w={254} className="pt-px font-['Noto_Sans',sans-serif] text-[19px] font-medium text-[#222]">Crops(plantation by count)</Fit>
        </div>
        <div className="bg-[#f4ecdb]"><WordCloud /></div>
      </div>
    </div>
  );
}

/* ---------- Sheet tabs and status ---------- */

function GridIcon() {
  return <Svg w={12} h={12}><path d="M0.6 0.6H11.4V11.4H0.6ZM6 0.6V11.4M0.6 6H11.4" stroke="#555" strokeWidth="1.1" /></Svg>;
}
function BookIcon() {
  return <Svg w={12} h={12}><path d="M0.6 0.8H3.5L6 2.5L8.5 0.8H11.4V9.5H9L6 11.4L3 9.5H0.6ZM6 2.5V11" stroke="#555" strokeWidth="1.1" /></Svg>;
}

const sheets: [string, number, string, React.ReactNode?][] = [
  ["statewise agricultural land", 148, "w-[163px] pl-[7px]"],
  ["Area vs production", 106, "w-[120px] pl-[7px]"],
  ["season based cultivation aera", 167, "w-[180px] pl-[7px]"],
  ["Yield by season", 87, "w-[101px] pl-[7px]"],
  ["crop plantation area", 113, "w-[128px] pl-[7px]"],
  ["Major crops growth Yoy", 131, "w-[145px] pl-[7px]"],
  ["crops", 32, "w-[46px] pl-[7px] bg-[#fafafa] text-[#222] font-medium"],
  ["season wise production", 133, "w-[146px] pl-[7px]"],
  ["Kpi's", 27, "w-[42px] pl-[7px]"],
  ["Dashboard 1", 70, "w-[103px] pl-[9px]", <GridIcon />],
  ["Dashboard 2", 71, "w-[106px] pl-[10px]", <GridIcon />],
  ["Dashboard 3", 72, "w-[105px] pl-[9px]", <GridIcon />],
  ["Story 1", 40, "w-[74px] pl-[9px]", <BookIcon />],
  ["Story 2", 41, "w-[76px] pl-[9px]", <BookIcon />],
];

function SheetTabs() {
  const plus = <path d="M12 9.5V17.5M8 13.5H16" stroke="#555" strokeWidth="2" />;
  const cell = "flex w-8 items-center justify-center border-r border-[#c9c9c9] shrink-0";
  return (
    <div className="flex h-[31px] border-y border-[#c9c9c9] bg-[#e6e6e6] text-[12px] text-[#666]">
      <div className="flex w-[126px] shrink-0 items-center border-r border-[#c9c9c9] pb-[3px] pl-[11px]">
        <Svg w={9} h={11}>
          <path d="M1 2V9C1 10.8 8 10.8 8 9V2" stroke="#666" />
          <ellipse cx="4.5" cy="2.2" rx="3.5" ry="1.5" stroke="#666" />
        </Svg>
        <Fit w={69} className="ml-[5px]">Data Source</Fit>
      </div>
      {sheets.map(([n, w, cls, icon]) => (
        <div key={n} className={clsx("flex shrink-0 items-center border-r border-[#c9c9c9] pb-[3px]", cls)}>
          {icon}
          <Fit w={w} className={icon ? "ml-[6px]" : ""}>{n}</Fit>
        </div>
      ))}
      <div className={cell}>
        <Svg w={17} h={18}><path d="M8 12H1V1H12V8" stroke="#555" strokeWidth="1.1" /><path d="M4 7V10M6.5 4.5V10M9 6V9" stroke="#555" strokeWidth="1.2" />{plus}</Svg>
      </div>
      <div className={cell}>
        <Svg w={17} h={18}><path d="M8 12H1V1H12V8M6.5 1V12M1 6.5H12" stroke="#555" strokeWidth="1.1" />{plus}</Svg>
      </div>
      <div className={cell}>
        <Svg w={17} h={18}><path d="M1 1H3.8L6.5 3L9.2 1H12V8M1 1V10H3.5L6.5 12M6.5 3V12" stroke="#555" strokeWidth="1.1" />{plus}</Svg>
      </div>
    </div>
  );
}

function StatusBar() {
  return (
    <div className="flex h-[17px] items-center gap-3 bg-[#ebebeb] pl-[10px] text-[11px] text-[#333]">
      <Fit w={43}>57 marks</Fit>
      <Fit w={82}>1 row by 1 column</Fit>
      <Fit w={131}>SUM of CNT(Crop): 345,375</Fit>
    </div>
  );
}

/* ---------- Desktop taskbar ---------- */

function Okapi() {
  return (
    <svg width="76" height="38" viewBox="0 0 76 38" className="shrink-0">
      <defs>
        <linearGradient id="hill" x1="0" x2="1">
          <stop offset="0" stopColor="#8ea33a" />
          <stop offset="0.3" stopColor="#c9a93e" />
          <stop offset="1" stopColor="#9db52a" />
        </linearGradient>
      </defs>
      <path d="M0 38C12 27 26 25 40 30C56 35 64 35 76 30V38Z" fill="url(#hill)" />
      <path d="M34 19L34.6 37M38 20L37.500 36M50 20L50 37M53 20L55 36" stroke="#f2ece6" strokeWidth="2.800" />
      <path d="M34 19L34.600 37M38 20L37.500 36M50 20L50 37M53 20L55 36" stroke="#3a221a" strokeWidth="2.800" strokeDasharray="1.600 1.600" />
      <path d="M14 7L20 5L25 6L29 9C35 8 40 7 45 8C52 9 56 13 55.500 20L54 25L48 24L43 26H34L29 21C26 17 24 14 22 13L18 14L15 12Z" fill="#8f5233" />
      <path d="M38 8C47 6 55 11 55 18C51 21 44 22 39 17Z" fill="#6e3a25" />
      <path d="M48 20L55 17L55 21L48.500 23Z" fill="#f2ece6" />
      <path d="M11 1L17 5L14 8ZM25 1L22 5L27 6Z" fill="#7b462e" />
      <path d="M15 7L21 6L20 12L17 15L15 12Z" fill="#e9dccb" />
      <path d="M16.500 11H19.500V15.500H17Z" fill="#3c241b" />
      <path d="M55 15C58 18 58 22 57.500 25" stroke="#6e3a25" strokeWidth="1.300" fill="none" />
    </svg>
  );
}

function EdgeIcon() {
  return (
    <svg width="24" height="24" viewBox="0 0 24 24">
      <defs>
        <linearGradient id="edgeTop" x1="0" x2="1" y1="0" y2="0.5">
          <stop offset="0" stopColor="#2aa9e0" />
          <stop offset="0.6" stopColor="#35c6b8" />
          <stop offset="1" stopColor="#6fdc4b" />
        </linearGradient>
      </defs>
      <path d="M1 11C1 4 6.500 0.500 12 0.500C19 0.500 23.500 5.500 23.500 10C23.500 14 20.500 16 17.500 16C14.500 16 13.500 15 14.300 13.500C16 11 14 7.500 9.500 7.500C5 7.500 2 9.500 1 13Z" fill="url(#edgeTop)" />
      <path d="M0.600 12.500C1.500 9 5 7.300 9 7.400C6.500 9 7 15 10 18C13 21 17 20.500 21.500 18C19.500 21.500 16 23.500 12 23.500C5.500 23.500 0.300 18.500 0.600 12.500Z" fill="#1269bd" />
      <path d="M7.600 14C8 18.500 13 21.500 21.500 18C20.500 20 18.500 22 16 22.800C10.500 23 7 19 7.600 14Z" fill="#0c4a93" />
    </svg>
  );
}
function FolderIcon() {
  return (
    <svg width="22" height="20" viewBox="0 0 22 20">
      <path d="M0 1.500Q0 1 1 1H8L10 3H21V7H0Z" fill="#d9990f" />
      <path d="M0 5H10L11 3.500H22V18H0Z" fill="#fcd567" />
      <path d="M4 19V12.500Q4 11 5.500 11H16.500Q18 11 18 12.500V19H14.500V15H7.500V19Z" fill="#3f9bdc" />
    </svg>
  );
}
function ChromeIcon() {
  return (
    <svg width="24" height="24" viewBox="0 0 24 24">
      <circle cx="12" cy="12" r="11.800" fill="#fff" />
      <path d="M12 12L1.800 6A11.800 11.800 0 0 1 22.200 6Z" fill="#ea4335" />
      <path d="M22.200 6A11.800 11.800 0 0 1 12 23.800L17 14.500L12 6Z" fill="#fbc116" />
      <path d="M12 23.800A11.800 11.800 0 0 1 1.800 6L7.300 14.800L13 16.500L16.500 15.500Z" fill="#2fa34f" />
      <circle cx="12" cy="12" r="5.600" fill="#fff" />
      <circle cx="12" cy="12" r="4.400" fill="#1a73e8" />
    </svg>
  );
}
function FirefoxIcon() {
  return (
    <svg width="24" height="24" viewBox="0 0 24 24">
      <defs>
        <linearGradient id="fox" x1="0.8" x2="0.3" y1="0" y2="1">
          <stop offset="0" stopColor="#ffdf3d" />
          <stop offset="0.45" stopColor="#ff8a1e" />
          <stop offset="1" stopColor="#f5156c" />
        </linearGradient>
      </defs>
      <path d="M14.500 0.500C18 2.500 18.500 5 19.500 5.500C21 6.500 23 9 23 13C23 19 18 23.600 12 23.600C6 23.600 1 19 1 13C1 9 2.500 6 4 4.500C4 6 4.500 6.500 5 6.500C6.500 5.500 8 5.500 9 5.700C11 5.500 14 3.500 14.500 0.500Z" fill="url(#fox)" />
      <circle cx="12" cy="13.500" r="5.300" fill="#6d3fc4" />
      <path d="M5.500 8.500C9 7.500 12 8.500 13.500 10C11 10 10 11.500 10.500 13C8 13 6 11.500 5.500 8.500Z" fill="#ffab2e" />
    </svg>
  );
}
function OfficeIcon({ word }: { word?: boolean }) {
  const c = word ? "#3b66ae" : "#3f9443";
  return (
    <svg width="23" height="23" viewBox="0 0 23 23">
      <path d="M3.500 1L21 0.500L22.500 22L4 21.500Z" fill="#eef3f9" stroke={c} strokeWidth="0.800" />
      <path d="M16 4.500H20M16 7.500H20M16 10.500H20M16 13.500H20M8 17H20M8 19.500H20" stroke={word ? "#5d88c9" : "#5fb04c"} strokeWidth="1.500" />
      <path d="M1 2.500L15 2V16.500L1 18Z" fill={word ? "#dfe8f5" : "#e0f0dc"} stroke={c} strokeWidth="0.700" />
      {word
        ? <path d="M3 5.500L5.300 14L8 6.500L10.300 14L13 5" stroke={c} strokeWidth="2.100" fill="none" />
        : <path d="M4 4.500L12.500 15.500M12 4L3.500 15.500" stroke={c} strokeWidth="3" fill="none" />}
    </svg>
  );
}
function WeatherIcon() {
  return (
    <svg width="25" height="26" viewBox="0 0 25 26">
      <defs>
        <linearGradient id="sun" x1="0" x2="1" y1="0" y2="1">
          <stop offset="0" stopColor="#fbb62f" />
          <stop offset="1" stopColor="#ef6a18" />
        </linearGradient>
      </defs>
      <circle cx="12" cy="14" r="10.500" fill="url(#sun)" />
      <path d="M3 9.500A3.200 3.200 0 0 1 3 3.800A4.300 4.300 0 0 1 11 3.500A3 3 0 0 1 12.500 9.500Z" fill="#b6cdf2" />
      <path d="M12.500 23A3.300 3.300 0 0 1 13 17.500A4.300 4.300 0 0 1 20.500 17A3.200 3.200 0 0 1 21.500 23Z" fill="#c4d7f7" />
    </svg>
  );
}

function Taskbar() {
  const app = "flex w-[49px] items-center justify-center shrink-0";
  return (
    <div className="flex h-10 bg-linear-to-r from-[#24343c] via-[#29363a] to-[#1d2a34] text-white">
      <div className="flex w-12 shrink-0 items-center justify-center">
        <Svg w={16} h={16}><path d="M0 2.300L7 1.300V7.600H0ZM8 1.100L16 0V7.600H8ZM0 8.400H7V14.700L0 13.700ZM8 8.400H16V16L8 14.900Z" fill="#fff" /></Svg>
      </div>
      <div className="flex w-[288px] shrink-0 items-center border border-[#bdbdbd] bg-[#f2f2f2] pl-[11px]">
        <Svg w={17} h={17}>
          <circle cx="10" cy="6.500" r="5.600" stroke="#222" strokeWidth="1.300" />
          <path d="M6 10.500L0.700 16" stroke="#222" strokeWidth="1.300" />
        </Svg>
        <Fit w={128} className="ml-[11px] text-[15px] text-[#2b2b2b]">Type here to search</Fit>
        <div className="ml-auto"><Okapi /></div>
      </div>
      <div className="flex w-[48px] shrink-0 items-center justify-center">
        <Svg w={18} h={17}>
          <path d="M1 1V3.500H11.500V1M1 16V13.500H11.500V16M1 5.500H11.500V11.500H1Z" stroke="#fff" strokeWidth="1.200" />
          <path d="M15.500 1V4M15.500 9.500V16" stroke="#fff" strokeWidth="1.200" />
          <rect x="14" y="5" width="3" height="3" fill="#fff" />
        </Svg>
      </div>
      <div className={clsx(app, "ml-[2px]")}><EdgeIcon /></div>
      <div className={app}><FolderIcon /></div>
      <div className={clsx(app, "border-b-2 border-[#76b9ed] bg-[#4e5b62] pt-[2px]")}><ChromeIcon /></div>
      <div className={app}><FirefoxIcon /></div>
      <div className={app}><OfficeIcon word /></div>
      <div className={app}><OfficeIcon /></div>
      <div className="ml-auto flex items-center">
        <WeatherIcon />
        <Fit w={30} className="ml-[7px] pt-px text-[14px]">26°C</Fit>
        <Fit w={75} className="ml-[9px] pt-px text-[14px]">Partly sunny</Fit>
        <Svg w={12} h={8} className="ml-4"><path d="M0.800 7L6 1.500L11.200 7" stroke="#fff" strokeWidth="1.400" /></Svg>
        <Svg w={12} h={16} className="ml-3">
          <rect x="1" y="4.500" width="7" height="7" rx="1" stroke="#fff" strokeWidth="1.300" />
          <path d="M8 7L11 5.500V10.500L8 9M2 1.500Q5.500 0 9 1.500M2 14.500Q5.500 16 9 14.500" stroke="#fff" strokeWidth="1.200" />
        </Svg>
        <Svg w={14} h={14} className="ml-3">
          <path d="M1 13A12 12 0 0 1 13 1M4 13A9 9 0 0 1 13 4.500M7 13A6 6 0 0 1 13 7.500" stroke="#c5cacd" strokeWidth="1.100" />
          <path d="M10 13A3 3 0 0 1 13 10V13Z" fill="#fff" />
        </Svg>
        <Svg w={17} h={14} className="ml-[7px]">
          <path d="M0.700 4.700H3L6.500 1.500V12.500L3 9.300H0.700ZM9 4.500Q10.500 7 9 9.500M11.500 3Q14 7 11.500 11M14 1.500Q17.500 7 14 12.500" stroke="#fff" strokeWidth="1.200" />
        </Svg>
        <Fit w={23} className="ml-[9px] text-[12.500px]">ENG</Fit>
        <div className="ml-[12px] flex w-[60px] flex-col items-center text-[12px] leading-[17px]">
          <Fit w={28}>09:43</Fit>
          <Fit w={58}>18-10-2023</Fit>
        </div>
        <div className="relative ml-[17px] h-[18px] w-[24px]">
          <Svg w={17} h={17}>
            <path d="M0 0H16V13H8L4 17V13H0Z" fill="#fff" />
            <path d="M3 3.500H13M3 6.500H13M3 9.500H10" stroke="#27343a" strokeWidth="1.100" />
          </Svg>
          <div className="absolute left-[8px] top-[7px] flex size-4 items-center justify-center rounded-full border border-[#8b9296] bg-[#2b3338] text-[11px] font-semibold">6</div>
        </div>
        <div className="ml-[12px] mr-1 h-10 w-px bg-[#6d767b]" />
      </div>
    </div>
  );
}

export default function App() {
  return (
    <div className="flex h-[1080px] w-[1920px] flex-col overflow-hidden bg-[#f3f3f3] font-['Noto_Sans',sans-serif]">
      <TabStrip />
      <AddressBar />
      <Bookmarks />
      <div className="flex h-[931px] shrink-0 flex-col font-[Inter,'Noto_Sans',sans-serif]">
        <Header />
        <ToolBar />
        <div className="flex h-[783px]">
          <div className="flex h-[782px]"><DataPane /></div>
          <Cards />
          <View />
        </div>
        <SheetTabs />
        <StatusBar />
      </div>
      <Taskbar />
    </div>
  );
}
